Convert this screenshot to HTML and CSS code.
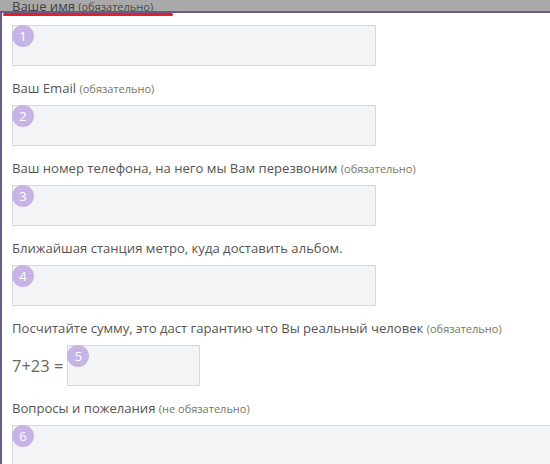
FILE: index.html
```html
<!DOCTYPE html>
<html lang="ru">
<head>
<meta charset="utf-8">
<link rel="stylesheet" href="styles.css">
</head>
<body>
<div class="topstrip"><div class="toplabel">Ваше имя <span class="req">(обязательно)</span></div></div>
<div class="panel">
  <div class="redline"></div>
  <div class="field"><span class="badge">1</span></div>

  <div class="label">Ваш Email <span class="req">(обязательно)</span></div>
  <div class="field"><span class="badge">2</span></div>

  <div class="label">Ваш номер телефона, на него мы Вам перезвоним <span class="req">(обязательно)</span></div>
  <div class="field"><span class="badge">3</span></div>

  <div class="label">Ближайшая станция метро, куда доставить альбом.</div>
  <div class="field"><span class="badge">4</span></div>

  <div class="label">Посчитайте сумму, это даст гарантию что Вы реальный человек <span class="req">(обязательно)</span></div>
  <div class="captcha">
    <span class="sum">7+23 =</span>
    <div class="field small"><span class="badge">5</span></div>
  </div>

  <div class="label">Вопросы и пожелания <span class="req">(не обязательно)</span></div>
  <div class="field wide"><span class="badge">6</span></div>
</div>
</body>
</html>
```
FILE: styles.css
```css
html, body {
  margin: 0;
  padding: 0;
  background: #ffffff;
  font-family: "Open Sans", "Noto Sans", sans-serif;
  overflow: hidden;
}
.topstrip {
  height: 11px;
  background: #a9a9a9;
  overflow: hidden;
  padding-left: 12px;
}
.toplabel {
  font-size: 13px;
  line-height: 18px;
  height: 18px;
  margin-top: -3px;
  color: #3f3f45;
  white-space: nowrap;
}
.toplabel .req {
  color: #4a4a40;
}
.panel {
  position: relative;
  border-top: 2px solid #6a5b8c;
  border-left: 2px solid #6a5b8c;
  padding: 12px 0 0 10px;
  height: 440px;
  overflow: hidden;
}
.redline {
  position: absolute;
  left: 1px;
  top: 0;
  width: 170px;
  height: 3px;
  border-radius: 2px;
  background: #e41e2b;
}
.field {
  position: relative;
  width: 362px;
  height: 39px;
  background: #f3f4f6;
  border: 1px solid #d9d9d9;
}
.field.small {
  width: 131px;
}
.field.wide {
  width: 560px;
  height: 60px;
}
.badge {
  position: absolute;
  left: -1px;
  top: -1px;
  width: 22px;
  height: 22px;
  border-radius: 50%;
  background: #c6b4e6;
  color: #ffffff;
  font-size: 13px;
  line-height: 22px;
  text-align: center;
}
.label {
  font-size: 13.1px;
  line-height: 18px;
  height: 18px;
  color: #555555;
  margin: 13px 0 8px;
  white-space: nowrap;
}
.req {
  font-size: 11px;
  color: #77775f;
}
.captcha {
  display: flex;
  align-items: center;
  gap: 4px;
}
.sum {
  font-size: 16.5px;
  color: #6c6c52;
}
```
